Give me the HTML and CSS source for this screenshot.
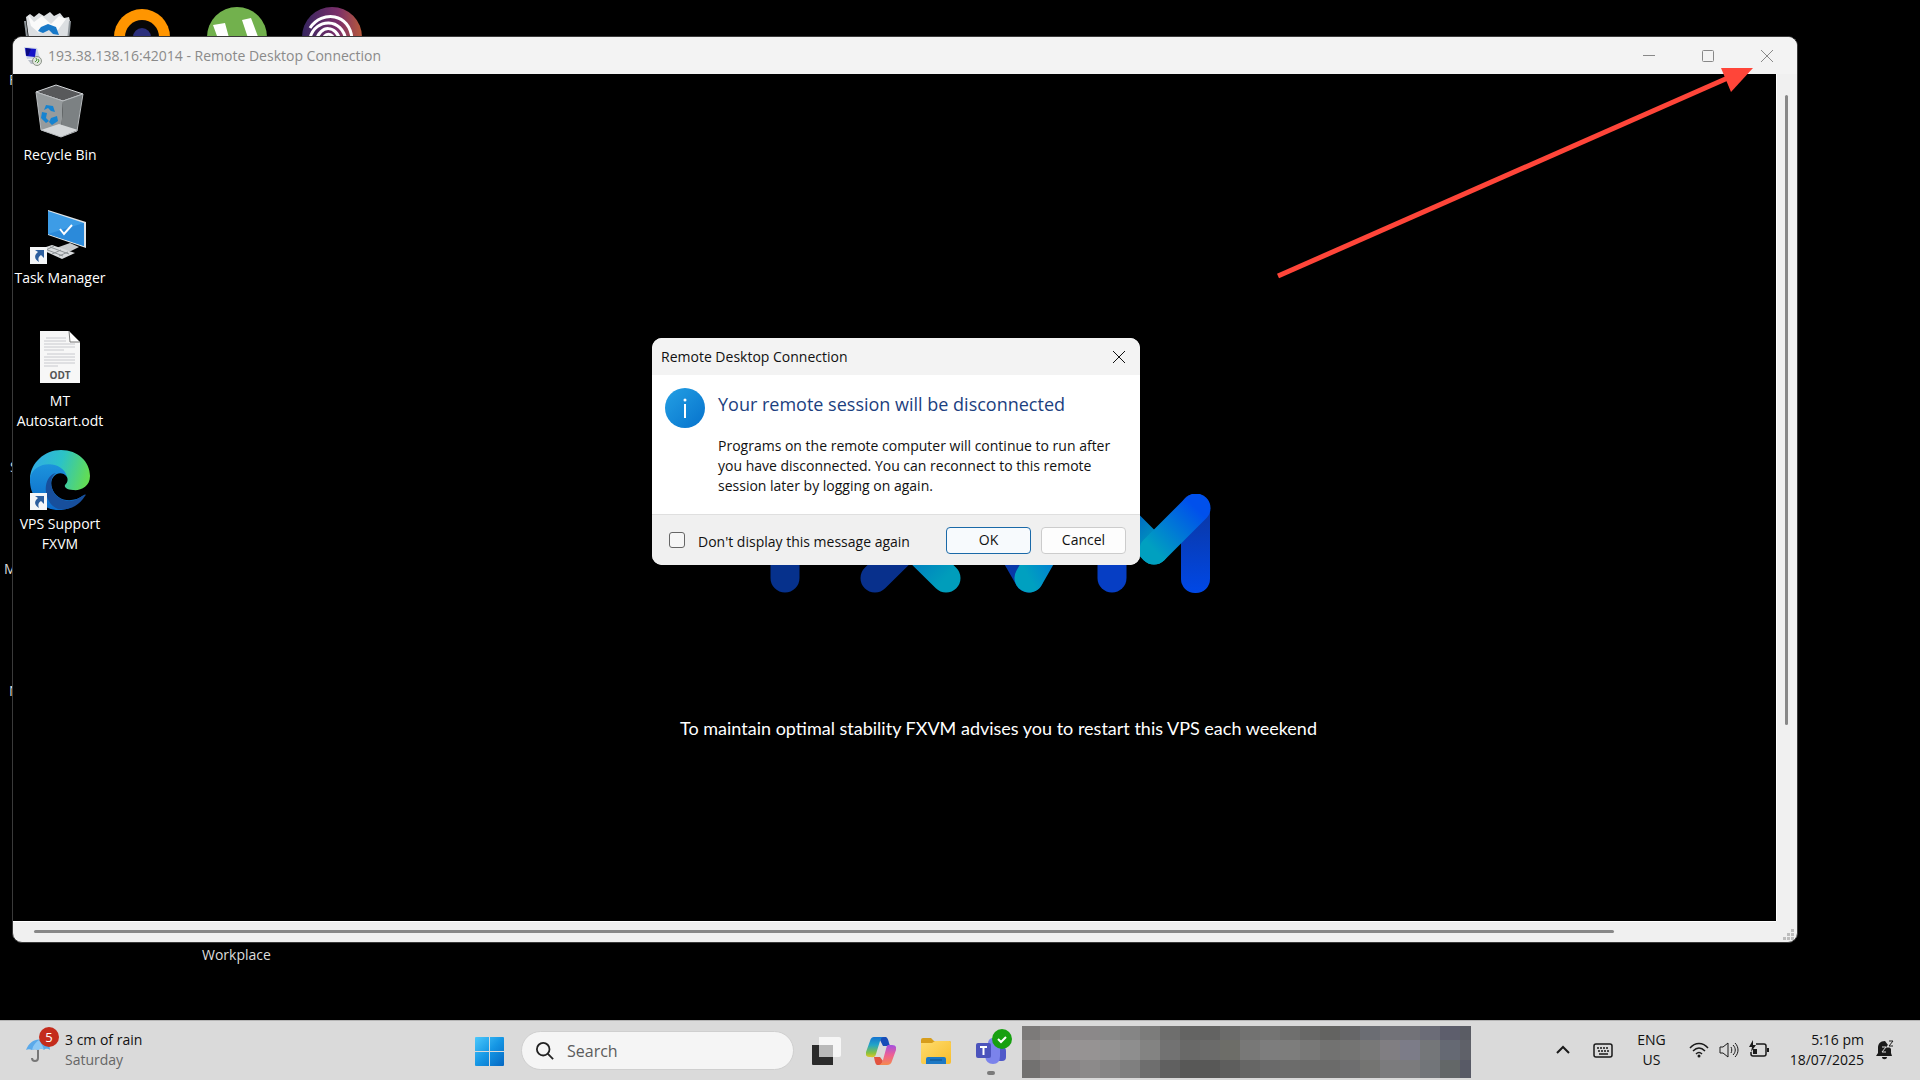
FILE: index.html
```html
<!DOCTYPE html>
<html lang="en">
<head>
    <meta charset="UTF-8">
    <meta name="viewport" content="width=device-width, initial-scale=1.0">
    <title>Remote Desktop Connection</title>
    <link rel="stylesheet" href="styles.css">
</head>
<body>

    <main class="desktop">
        <!-- Icons of the local desktop, partly hidden by the window -->
        <div class="host-icons">
            <svg class="host-icon" viewBox="0 0 60 60">
                <path d="M9 10l4-3 4 3 5-4 5 3 6-4 4 4 6-3 4 5 5-1 1 4-4 40H15z" fill="#dcdfe2"/>
                <path d="M11 8l6 7 8-6 9 8 8-8 7 3-8 11-10-5-9 8-8-7z" fill="#fafafa"/>
                <path d="M8 14l5 40M53 14l-4 40" stroke="#8f969b" stroke-width="2"/>
                <path d="M24 20l7-3 8 3 3 8-6-1-4-4-6 3-5-2zM19 34l8-5 3 5-3 8zM34 30l9 1-2 7z" fill="#1778c8"/>
            </svg>
            <svg class="host-icon" viewBox="0 0 60 60">
                <circle cx="30" cy="30" r="28" fill="#ff9500"/>
                <circle cx="30" cy="30" r="17" fill="#070707"/>
                <circle cx="30" cy="30" r="9" fill="#2b2f7c"/>
            </svg>
            <svg class="host-icon" viewBox="0 0 60 60">
                <circle cx="30" cy="30" r="30" fill="#72b14d"/>
                <path d="M6 18l12-2 6 22-10 2zM35 13l9-2 9 24-10 2z" fill="#fff"/>
            </svg>
            <svg class="host-icon" viewBox="0 0 60 60">
                <defs>
                    <linearGradient id="rings" x1="0" x2="1">
                        <stop offset="0" stop-color="#35255f"/>
                        <stop offset=".6" stop-color="#7b2f6a"/>
                        <stop offset="1" stop-color="#b85a3a"/>
                    </linearGradient>
                </defs>
                <circle cx="30" cy="30" r="30" fill="url(#rings)"/>
                <g fill="none" stroke="#fff" stroke-width="3">
                    <path d="M8 21C20 3 48 6 50 32"/>
                    <path d="M8 31C13 11 41 10 44 34"/>
                    <path d="M14 34C18 17 35 18 38 34"/>
                    <path d="M20 34c3-9 10-9 13 0"/>
                </g>
            </svg>
        </div>
        <span class="host-label label-f">F</span>
        <span class="host-label label-s">S</span>
        <span class="host-label label-m">M</span>
        <span class="host-label label-n">N</span>
        <span class="host-label label-workplace">Workplace</span>

        <!-- Remote desktop window -->
        <section class="window">
            <header class="titlebar">
                <svg class="app-icon" viewBox="0 0 20 20">
                    <path d="M5 14h9l2 4H8z" fill="#b9bfc9"/>
                    <path d="M1 1l13 1 3 10-13 1z" fill="#c9d3e6"/>
                    <path d="M2 2l11 1-1 8-9-1z" fill="#1414c8"/>
                    <path d="M3 2l5 1-3 7-2-1z" fill="#0a0a80"/>
                    <circle cx="14" cy="15" r="4.5" fill="#dfe3dc" stroke="#8d948b"/>
                    <path d="M12 16l2-2-1-2M14 17l2-2-1-2" fill="none" stroke="#4c9a3b"/>
                </svg>
                <h1 class="title">193.38.138.16:42014 - Remote Desktop Connection</h1>
                <div class="window-buttons">
                    <button class="window-button" aria-label="Minimize">
                        <svg viewBox="0 0 12 12"><path d="M0 5.5h12"/></svg>
                    </button>
                    <button class="window-button" aria-label="Maximize">
                        <svg viewBox="0 0 12 12"><rect x=".5" y=".5" width="11" height="11" rx="1"/></svg>
                    </button>
                    <button class="window-button" aria-label="Close">
                        <svg viewBox="0 0 12 12"><path d="M0 0l12 12M12 0L0 12"/></svg>
                    </button>
                </div>
            </header>

            <div class="viewport">
                <div class="session">
                    <div class="wallpaper">
                        <svg class="logo" viewBox="0 0 458 99">
                            <defs>
                                <linearGradient id="cyanUp" x1="0" y1="1" x2="1" y2="0">
                                    <stop offset="0" stop-color="#00a0c0"/>
                                    <stop offset="1" stop-color="#0050ec"/>
                                </linearGradient>
                                <linearGradient id="cyanDown" x1="0" y1="0" x2="1" y2="1">
                                    <stop offset="0" stop-color="#0048c8"/>
                                    <stop offset="1" stop-color="#009dbb"/>
                                </linearGradient>
                                <linearGradient id="leg" gradientUnits="userSpaceOnUse" x1="0" y1="20" x2="0" y2="99">
                                    <stop offset="0" stop-color="#0a38a8"/>
                                    <stop offset="1" stop-color="#0048e6"/>
                                </linearGradient>
                            </defs>
                            <g fill="none" stroke-width="29" stroke-linecap="round" stroke-linejoin="round">
                                <path d="M15 84V15h56M15 50h44" stroke="#06318c"/>
                                <path d="M105 84L176 14" stroke="#08308c"/>
                                <path d="M105 14l71 70" stroke="url(#cyanDown)"/>
                                <path d="M219 14l40 70" stroke="#0838a8"/>
                                <path d="M259 84l40-70" stroke="url(#cyanUp)"/>
                                <path d="M342 84V14" stroke="#063ec4"/>
                                <path d="M342 14l42 42" stroke="url(#cyanDown)"/>
                            </g>
                            <rect x="411" y="0" width="29" height="99" rx="14" fill="url(#leg)"/>
                            <path d="M384 56l42-42" fill="none" stroke="url(#cyanUp)" stroke-width="29" stroke-linecap="round"/>
                        </svg>
                        <p class="advice">To maintain optimal stability FXVM advises you to restart this VPS each weekend</p>
                    </div>

                    <div class="remote-icons">
                        <a class="shortcut" href="#">
                            <svg class="shortcut-icon" viewBox="0 0 60 60">
                                <path d="M6 11l20-7 27 9-20 7z" fill="#58595b" stroke="#d7dadd"/>
                                <path d="M6 11l27 9-2 36-20-7z" fill="#969b9d"/>
                                <path d="M53 13L33 20l-2 36 16-7z" fill="#7c8183"/>
                                <path d="M11 49l18-6 19 6-17 7z" fill="#d4d7d9"/>
                                <path d="M6 11l5 38 20 7 16-6 6-37-20 7z" fill="none" stroke="#b9bdc0"/>
                                <path d="M16 24l7 1 2 6-4-1-3-3-4 2zM12 31l5 1-1 5 3 3-3 2-5-5zM21 37l6-2 1 5-6 4-3-3z" fill="#1683d0"/>
                            </svg>
                            <span>Recycle Bin</span>
                        </a>
                        <a class="shortcut" href="#">
                            <svg class="shortcut-icon" viewBox="0 -3 60 60">
                                <path d="M26 41l14-5 9 4-8 4-12 1z" fill="#c7cacc"/>
                                <path d="M10 42l12-4 23 8-13 6z" fill="#d9dcde"/>
                                <path d="M15 42l18 7M20 40l19 7M14 44l10-5M22 47l9-4M29 49l9-4" stroke="#8d9295"/>
                                <path d="M18 3l38 12v26L18 28z" fill="#e0e5e8"/>
                                <path d="M18 4l36 12v23L18 27z" fill="#3d9ce6"/>
                                <path d="M54 16v23L18 27z" fill="#2b8ada"/>
                                <path d="M30 22l4 5 8-9" fill="none" stroke="#fff" stroke-width="2"/>
                                <path d="M0 40h17v17H0z" fill="#f4f6f8"/>
                                <path d="M5 43h9v8l-3-3c-3 2-3 4-2 7-5-3-5-7-1-10z" fill="#2d5f9e"/>
                            </svg>
                            <span>Task Manager</span>
                        </a>
                        <a class="shortcut" href="#">
                            <svg class="shortcut-icon" viewBox="0 -3 60 60">
                                <path d="M10 1h29l11 11v41H10z" fill="#f7f7f7"/>
                                <path d="M39 1l11 11H40z" fill="#fff" stroke="#777"/>
                                <path d="M16 8h20M14 11h22M14 14h31M14 17h31M14 20h20M17 24h28M14 27h31M14 30h31M14 33h31M14 36h14" stroke="#c8c9ce"/>
                                <text x="30" y="49" class="odt-text">ODT</text>
                            </svg>
                            <span>MT<br>Autostart.odt</span>
                        </a>
                        <a class="shortcut" href="#">
                            <svg class="shortcut-icon" viewBox="0 0 60 60">
                                <defs>
                                    <linearGradient id="edgeTop" x1="0" y1=".3" x2="1" y2=".5">
                                        <stop offset="0" stop-color="#31a9e8"/>
                                        <stop offset=".5" stop-color="#2cc3c6"/>
                                        <stop offset="1" stop-color="#62dc54"/>
                                    </linearGradient>
                                    <linearGradient id="edgeLeft" x1="0" y1="0" x2="0" y2="1">
                                        <stop offset="0" stop-color="#1c93dc"/>
                                        <stop offset="1" stop-color="#0b69c8"/>
                                    </linearGradient>
                                </defs>
                                <path d="M0 28C1 13 14 0 31 0c17 0 29 12 29 26 0 11-10 15-17 14-6 0-9-3-8-5 6-5 1-13-6-13z" fill="url(#edgeTop)"/>
                                <path d="M0 28c4-18 33-18 37-1-7-9-19 0-15 11 4 13 20 16 32 7C48 56 37 61 26 60 10 58-1 45 0 28z" fill="url(#edgeLeft)"/>
                                <path d="M26 23c-9 5-6 27 13 28 6 0 10-3 15-6 2-1 2 0 1 1-6 10-17 15-27 13C12 53 12 26 26 23z" fill="#174f9c"/>
                                <path d="M0 43h17v17H0z" fill="#f4f6f8"/>
                                <path d="M5 46h9v8l-3-3c-3 2-3 4-2 7-5-3-5-7-1-10z" fill="#2d5f9e"/>
                            </svg>
                            <span>VPS Support<br>FXVM</span>
                        </a>
                    </div>
                </div>
                <div class="scroll-y"><div class="thumb-y"></div></div>
                <div class="scroll-x"><div class="thumb-x"></div></div>
                <svg class="grip" viewBox="0 0 11 11">
                    <path d="M8 0h3v3H8zM4 4h3v3H4zM8 4h3v3H8zM0 8h3v3H0zM4 8h3v3H4zM8 8h3v3H8z" fill="#bdbdbd"/>
                </svg>
            </div>
        </section>

        <!-- Disconnect message -->
        <section class="dialog" role="dialog" aria-labelledby="dialog-title">
            <header class="dialog-bar">
                <span id="dialog-title">Remote Desktop Connection</span>
                <button class="dialog-close" aria-label="Close">
                    <svg viewBox="0 0 12 12"><path d="M0 0l12 12M12 0L0 12"/></svg>
                </button>
            </header>
            <div class="dialog-body">
                <svg class="info" viewBox="0 0 40 40">
                    <defs>
                        <linearGradient id="infoFill" x1="0" y1="0" x2="1" y2="1">
                            <stop offset="0" stop-color="#24a0e4"/>
                            <stop offset="1" stop-color="#0672cc"/>
                        </linearGradient>
                    </defs>
                    <circle cx="20" cy="20" r="20" fill="url(#infoFill)"/>
                    <circle cx="20" cy="12" r="1.5" fill="#fff"/>
                    <path d="M20 16v14" stroke="#fff" stroke-width="2"/>
                </svg>
                <div>
                    <h2 class="dialog-heading">Your remote session will be disconnected</h2>
                    <p class="dialog-text">Programs on the remote computer will continue to run after<br>you have disconnected. You can reconnect to this remote<br>session later by logging on again.</p>
                </div>
            </div>
            <footer class="dialog-footer">
                <input class="checkbox" type="checkbox" id="dont-show">
                <label class="checkbox-label" for="dont-show">Don't display this message again</label>
                <button class="button primary">OK</button>
                <button class="button">Cancel</button>
            </footer>
        </section>

        <svg class="arrow" viewBox="0 0 490 220">
            <path d="M8 216L460 17" stroke="#ff4539" stroke-width="5"/>
            <path d="M451 8h32l-22 24z" fill="#ff4539"/>
        </svg>
    </main>

    <footer class="taskbar">
        <button class="weather">
            <span class="weather-icon">
                <svg viewBox="0 0 24 24">
                    <path d="M0 12C3 4 10 0 16 2c5 1 8 5 8 10-3-2-5-1-6 0-2-2-4-1-6 0-2-1-4-1-6 0-2-1-4-1-6 0z" fill="#5aa9ea"/>
                    <path d="M6 12C7 7 10 4 13 2c2 3 4 6 5 10-2-2-4-1-6 0-2-1-4-1-6 0z" fill="#8cc8f5"/>
                    <path d="M12 12v8c0 4-6 4-6 0" fill="none" stroke="#777" stroke-width="2"/>
                </svg>
                <span class="badge">5</span>
            </span>
            <span class="weather-text">3 cm of rain<br><span class="weather-day">Saturday</span></span>
        </button>

        <div class="apps">
            <button class="app" aria-label="Start">
                <svg viewBox="0 0 30 30">
                    <defs>
                        <linearGradient id="win" x1="0" y1="0" x2="1" y2="1">
                            <stop offset="0" stop-color="#4cc8fb"/>
                            <stop offset=".5" stop-color="#1596e4"/>
                            <stop offset="1" stop-color="#0567c2"/>
                        </linearGradient>
                    </defs>
                    <path d="M0 2q0-1 1-1h13v14H0zM15 1h13q1 0 1 1v13H15zM0 16h14v14H1q-1 0-1-1zM15 16h14v13q0 1-1 1H15z" fill="url(#win)"/>
                </svg>
            </button>
            <label class="search">
                <svg class="search-icon" viewBox="0 0 20 20">
                    <circle cx="8" cy="8" r="7" fill="none" stroke="#222" stroke-width="2"/>
                    <path d="M13 13l6 6" stroke="#222" stroke-width="2"/>
                </svg>
                <input class="search-input" type="text" placeholder="Search" aria-label="Search">
            </label>
            <button class="app" aria-label="Task view">
                <svg viewBox="0 0 30 30">
                    <path d="M1 9h21v20H2q-1 0-1-1z" fill="#2b2b2b"/>
                    <path d="M8 1h20q2 0 2 2v16q0 2-2 2H8z" fill="#f6f6f6"/>
                    <path d="M8 9h14v12H8z" fill="#b9b9b9"/>
                </svg>
            </button>
            <button class="app" aria-label="Copilot">
                <svg viewBox="0 0 30 30">
                    <defs>
                        <linearGradient id="copA" x1="0" y1="0" x2="0" y2="1">
                            <stop offset="0" stop-color="#1473d0"/>
                            <stop offset=".4" stop-color="#22a5c8"/>
                            <stop offset=".8" stop-color="#8cc23c"/>
                            <stop offset="1" stop-color="#e3c52c"/>
                        </linearGradient>
                        <linearGradient id="copB" x1="0" y1="0" x2="0" y2="1">
                            <stop offset="0" stop-color="#a350e0"/>
                            <stop offset=".5" stop-color="#ee5f94"/>
                            <stop offset="1" stop-color="#f58a4c"/>
                        </linearGradient>
                    </defs>
                    <path d="M15 1h5q2 1 3 6l1 3h-7l-3-6z" fill="#174db8"/>
                    <path d="M8 21h6l3 4-2 4H11q-2-1-3-8z" fill="#e2533f"/>
                    <path d="M8 1h10q-3 0-4 4l-4 13q-1 4-5 3H3q-4 0-3-5L4 5q1-4 4-4z" fill="url(#copA)"/>
                    <path d="M22 9h4q5 0 4 5l-4 11q-1 4-5 4H13q3-1 4-5l3-11q1-4 2-4z" fill="url(#copB)"/>
                </svg>
            </button>
            <button class="app" aria-label="File Explorer">
                <svg viewBox="0 0 30 30">
                    <defs>
                        <linearGradient id="folder" x1="0" y1="0" x2="1" y2="1">
                            <stop offset="0" stop-color="#ffdc6e"/>
                            <stop offset="1" stop-color="#f7bd2c"/>
                        </linearGradient>
                    </defs>
                    <path d="M0 4q0-2 2-2h8l3 3h15q2 0 2 2v8H0z" fill="#d79d1c"/>
                    <path d="M0 7h11l3-2h14q2 0 2 2v19q0 2-2 2H2q-2 0-2-2z" fill="url(#folder)"/>
                    <path d="M5 28v-5q0-2 2-2h16q2 0 2 2v5z" fill="#1c78c4"/>
                    <path d="M9 24h12" stroke="#0c4f88"/>
                </svg>
            </button>
            <button class="app running" aria-label="Teams">
                <svg viewBox="0 0 30 30">
                    <rect x="20" y="11" width="10" height="14" rx="4" fill="#5059c9"/>
                    <circle cx="17" cy="7" r="5" fill="#7b83eb"/>
                    <path d="M9 11h15v9q0 8-7 8t-8-8z" fill="#7b83eb"/>
                    <rect y="7" width="15" height="15" rx="2" fill="#4b53bc"/>
                    <path d="M4 11h7M7.5 11v8" stroke="#fff" stroke-width="2"/>
                </svg>
                <svg class="presence" viewBox="0 0 20 20">
                    <circle cx="10" cy="10" r="10" fill="#17a010"/>
                    <path d="M6 10l3 3 5-5" fill="none" stroke="#fff" stroke-width="2"/>
                </svg>
            </button>
            <svg class="mosaic" id="mosaic" viewBox="0 0 449 52"></svg>
        </div>

        <div class="tray">
            <button class="tray-button chevron" aria-label="Show hidden icons">
                <svg viewBox="0 0 14 20"><path d="M1 13l6-6 6 6" stroke-width="2"/></svg>
            </button>
            <button class="tray-button keyboard" aria-label="Touch keyboard">
                <svg viewBox="0 0 20 20">
                    <rect x="1" y="4" width="18" height="13" rx="2" stroke-width="1.5"/>
                    <path d="M4 8h12M5 11h11" stroke-width="1.5" stroke-dasharray="2 1"/>
                    <path d="M6 14h9" stroke-width="1.5"/>
                </svg>
            </button>
            <button class="tray-button language">ENG<br>US</button>
            <button class="tray-button status" aria-label="Network, volume and battery">
                <svg viewBox="0 0 20 20">
                    <path d="M1 8C6 2 14 2 19 8M4 11c4-4 8-4 12 0M7 14c2-2 4-2 6 0" stroke-width="1.5"/>
                    <circle cx="10" cy="16" r="1.5" fill="#1a1a1a" stroke="none"/>
                </svg>
                <svg viewBox="0 0 20 20">
                    <path d="M1 7h3l5-4v14l-5-4H1zM12 7c1 2 1 4 0 6M14 5c3 3 3 7 0 10M16 3c4 4 4 10 0 14"/>
                </svg>
                <svg viewBox="0 0 20 20">
                    <path d="M7 4h8q2 0 2 2v8q0 2-2 2H4q-2 0-2-2v-2" stroke-width="1.5"/>
                    <path d="M18 8h2v4h-2zM4 9h4v5H4zM4 0L0 7h3l-1 5 5-7H4z" fill="#1a1a1a" stroke="none"/>
                </svg>
            </button>
            <button class="tray-button clock">5:16 pm<br>18/07/2025</button>
            <button class="tray-button bell" aria-label="Notifications">
                <svg viewBox="0 0 18 20">
                    <path d="M9 1c-5 0-7 3-7 7v5l-2 3h16l-1-3V9zM6 17h5c0 3-5 3-5 0z" fill="#1a1a1a" stroke="none"/>
                    <path d="M6 7h4l-4 5h4" stroke="#ddd"/>
                    <path d="M13 1h4l-4 5h4" stroke="#ddd" stroke-width="3"/>
                    <path d="M13 1h4l-4 5h4"/>
                </svg>
            </button>
        </div>
    </footer>

    <script>
        // Pixelated taskbar buttons, one colour per tile
        const rows = [
            ['7c7a79', '858281', '8b8889', '8b8889', '898989', '858585', '7c7c7b', '6e6e6d', '646463', '636362', '6b6b6a', '727271', '747473', '6f6f6e', '686867', '636361', '666668', '6b6d73', '727278', '727278', '6b6c77', '5d5e6c', '5a5c64'],
            ['8b8887', '908d8c', '969394', '969393', '939292', '8e8e8e', '838382', '727272', '696968', '6b6b6a', '6d6d68', '787877', '7d7d7d', '7d7d7c', '787877', '727271', '747473', '787878', '807e82', '7c7c88', '747679', '656973', '5f6169'],
            ['727170', '807c7c', '888586', '8c8a8a', '868585', '7f7f7f', '6e6e6e', '606060', '585857', '585857', '5e5e5d', '666665', '6a6a6a', '6c6c6b', '6b6b6a', '6b6b6a', '6e6e6f', '747472', '7b7b7d', '7b7b7d', '727579', '636768', '585a66']
        ];
        const tile = 20;
        let tiles = '';

        rows.forEach((row, r) => {
            row.forEach((color, c) => {
                tiles += `<rect x="${c * tile - 2}" y="${r * tile - 6}" width="${tile}" height="${tile}" fill="#${color}"/>`;
            });
        });
        document.getElementById('mosaic').innerHTML = tiles;
    </script>

</body>
</html>
```

FILE: styles.css
```css
/* Global Styles */
* {
    margin: 0;
    padding: 0;
    box-sizing: border-box;
}

body {
    display: flex;
    flex-direction: column;
    height: 100vh;
    overflow: hidden;
    background-color: #000;
    font-family: "Open Sans", "Noto Sans", sans-serif;
    font-size: 14px;
    line-height: 20px;
    color: #111;
}

button,
input {
    font: inherit;
    color: inherit;
    border: none;
    background: none;
}

svg {
    display: block;
}

.desktop {
    position: relative;
    flex: 1;
    overflow: hidden;
}

/* Local desktop */
.host-icons {
    display: flex;
    gap: 35px;
    padding: 7px 17px;
}

.host-icon {
    width: 60px;
    height: 60px;
}

.host-label {
    position: absolute;
    color: #ddd;
}

.label-f {
    left: 9px;
    top: 70px;
}

.label-s {
    left: 10px;
    top: 457px;
}

.label-m {
    left: 4px;
    top: 559px;
}

.label-n {
    left: 9px;
    top: 681px;
}

.label-workplace {
    left: 202px;
    bottom: 55px;
}

/* Remote window */
.window {
    position: absolute;
    left: 12px;
    right: 122px;
    top: 36px;
    bottom: 77px;
    display: flex;
    flex-direction: column;
    overflow: hidden;
    border: 1px solid #3a3a3a;
    border-radius: 10px;
    background-color: #f0f0f0;
}

.titlebar {
    display: flex;
    align-items: center;
    height: 37px;
    padding: 0 1px 0 10px;
    background-color: #f3f3f3;
    color: #8a8a8a;
}

.app-icon {
    width: 20px;
    height: 20px;
}

.title {
    margin-left: 5px;
    font-size: 14px;
    font-weight: 400;
}

.window-buttons {
    display: flex;
    margin-left: auto;
}

.window-button {
    display: grid;
    place-items: center;
    width: 59px;
    height: 36px;
}

.window-button svg,
.dialog-close svg {
    width: 12px;
    height: 12px;
    overflow: visible;
    fill: none;
    stroke: #888;
}

.viewport {
    flex: 1;
    display: grid;
    grid-template-columns: 1fr 21px;
    grid-template-rows: 1fr 21px;
    min-height: 0;
}

.session {
    display: grid;
    overflow: hidden;
    background-color: #000;
}

.wallpaper,
.remote-icons {
    grid-area: 1 / 1;
}

.wallpaper {
    display: flex;
    flex-direction: column;
    align-items: center;
    padding: 420px 0 0 208px;
}

.logo {
    width: 458px;
    height: 99px;
}

.advice {
    margin-top: 123px;
    font-family: Lato, sans-serif;
    font-size: 18px;
    line-height: 24px;
    color: #fff;
}

.remote-icons {
    display: flex;
    flex-direction: column;
    width: 94px;
    padding-top: 7px;
}

.shortcut {
    display: flex;
    flex-direction: column;
    align-items: center;
    gap: 4px;
    height: 123px;
    text-align: center;
    text-decoration: none;
    white-space: nowrap;
    color: #fff;
}

.shortcut-icon {
    width: 60px;
    height: 60px;
}

.odt-text {
    font-size: 10px;
    font-weight: 700;
    text-anchor: middle;
    fill: #555;
}

.scroll-y {
    padding: 21px 0 196px 8px;
    border-left: 1px solid #fff;
}

.thumb-y {
    width: 3px;
    height: 100%;
    border-radius: 2px;
    background-color: #888;
}

.scroll-x {
    padding: 8px 162px 0 21px;
    border-top: 1px solid #fff;
}

.thumb-x {
    height: 3px;
    border-radius: 2px;
    background-color: #888;
}

.grip {
    place-self: end;
    width: 11px;
    height: 11px;
    margin: 0 3px 2px 0;
}

/* Dialog */
.dialog {
    position: absolute;
    left: 652px;
    top: 338px;
    width: 488px;
    overflow: hidden;
    border-radius: 10px;
    background-color: #fff;
}

.dialog-bar {
    display: flex;
    align-items: center;
    justify-content: space-between;
    height: 37px;
    padding-left: 9px;
    background-color: #f3f3f3;
}

.dialog-close {
    display: grid;
    place-items: center;
    width: 42px;
    height: 36px;
}

.dialog-close svg {
    stroke: #111;
}

.dialog-body {
    display: flex;
    gap: 13px;
    padding: 13px 13px 18px;
}

.info {
    flex: none;
    width: 40px;
    height: 40px;
}

.dialog-heading {
    margin: 2px 0 18px;
    font-size: 18px;
    font-weight: 400;
    line-height: 28px;
    color: #1c3f80;
    white-space: nowrap;
}

.dialog-text {
    white-space: nowrap;
}

.dialog-footer {
    display: flex;
    align-items: center;
    height: 51px;
    padding: 0 14px 0 17px;
    border-top: 1px solid #dfdfdf;
    background-color: #f0f0f0;
}

.checkbox {
    appearance: none;
    width: 16px;
    height: 16px;
    border: 1px solid #666;
    border-radius: 3px;
    background-color: #f6f6f6;
}

.checkbox-label {
    margin: 4px auto 0 13px;
}

.button {
    width: 85px;
    height: 27px;
    margin-left: 10px;
    border: 1px solid #ccc;
    border-radius: 4px;
    background-color: #fdfdfd;
}

.button.primary {
    border-color: #1a69a8;
    background-color: #f7fafd;
}

/* Red pointer over the window */
.arrow {
    position: absolute;
    right: 160px;
    top: 60px;
    width: 490px;
    height: 220px;
    pointer-events: none;
}

/* Taskbar */
.taskbar {
    display: grid;
    grid-template-columns: 1fr auto 1fr;
    align-items: center;
    height: 60px;
    padding: 0 26px;
    border-top: 1px solid #b5b5b5;
    background-color: #dadada;
}

.weather {
    display: flex;
    align-items: center;
    gap: 15px;
    padding-bottom: 2px;
    text-align: left;
}

.weather-icon {
    position: relative;
}

.weather-icon svg {
    width: 24px;
    height: 24px;
}

.badge {
    position: absolute;
    left: 13px;
    top: -11px;
    width: 20px;
    height: 20px;
    border-radius: 50%;
    background-color: #c42b1c;
    font-size: 13px;
    text-align: center;
    color: #fff;
}

.weather-day {
    color: #666;
}

.apps {
    display: flex;
    align-items: center;
    gap: 25px;
    padding-left: 26px;
}

.app {
    position: relative;
    width: 30px;
    height: 30px;
}

.running::after {
    content: "";
    position: absolute;
    left: 11px;
    bottom: -9px;
    width: 8px;
    height: 4px;
    border-radius: 2px;
    background-color: #7a7a7a;
}

.presence {
    position: absolute;
    right: -6px;
    top: -7px;
    width: 20px;
    height: 20px;
}

.search {
    display: flex;
    align-items: center;
    gap: 13px;
    width: 273px;
    height: 39px;
    margin: 0 -8px 0 -9px;
    padding-left: 14px;
    border: 1px solid #cfcfcf;
    border-radius: 20px;
    background-color: #f5f5f5;
}

.search-icon {
    width: 18px;
    height: 18px;
}

.search-input {
    width: 200px;
    font-size: 16px;
    outline: none;
}

.search-input::placeholder {
    color: #5c5c5c;
}

.mosaic {
    width: 449px;
    height: 52px;
    margin: 2px 0 0 -9px;
}

.tray {
    display: flex;
    align-items: center;
    justify-content: flex-end;
    padding-bottom: 2px;
}

.tray-button svg {
    width: 20px;
    height: 20px;
    fill: none;
    stroke: #1a1a1a;
}

.chevron svg {
    width: 14px;
}

.keyboard {
    margin-left: 23px;
}

.language {
    margin-left: 24px;
}

.status {
    display: flex;
    gap: 10px;
    margin-left: 23px;
}

.clock {
    margin-left: 21px;
    text-align: right;
}

.bell {
    margin-left: 12px;
}

.bell svg {
    width: 18px;
}
```
